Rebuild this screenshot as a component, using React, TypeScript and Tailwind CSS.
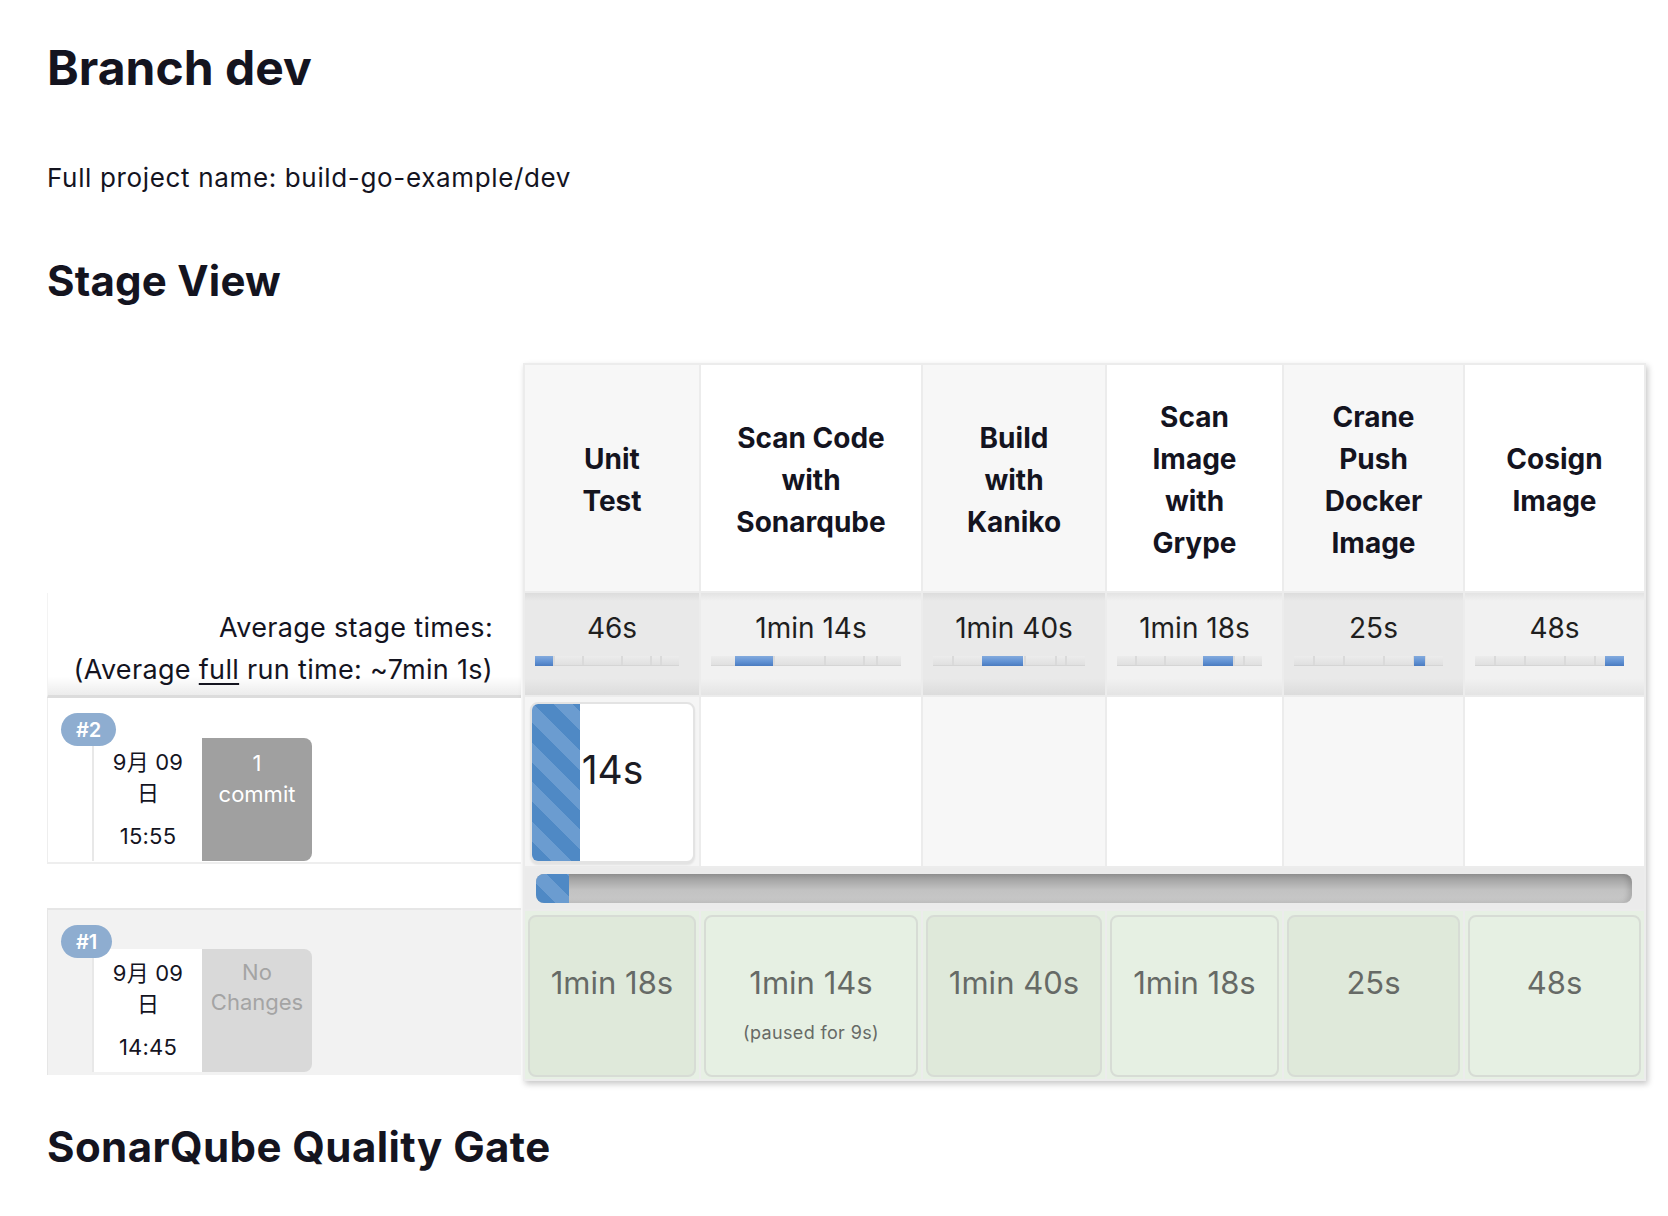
import React from 'react';

type Stage = {
  name: string[];
  avg: string;
  seg: [number, number];
  run1: string;
  paused?: string;
};

const stages: Stage[] = [
  { name: ['Unit', 'Test'], avg: '46s', seg: [0, 12.6], run1: '1min 18s' },
  { name: ['Scan Code', 'with', 'Sonarqube'], avg: '1min 14s', seg: [12.6, 32.6], run1: '1min 14s', paused: '(paused for 9s)' },
  { name: ['Build', 'with', 'Kaniko'], avg: '1min 40s', seg: [32.3, 59.5], run1: '1min 40s' },
  { name: ['Scan', 'Image', 'with', 'Grype'], avg: '1min 18s', seg: [59.5, 80.3], run1: '1min 18s' },
  { name: ['Crane', 'Push', 'Docker', 'Image'], avg: '25s', seg: [80.3, 87.6], run1: '25s' },
  { name: ['Cosign', 'Image'], avg: '48s', seg: [87, 100], run1: '48s' },
];

const ticks = [12.6, 32.6, 59.6, 80.2, 87];

function MiniBar({ seg }: { seg: [number, number] }) {
  return (
    <div className="relative ml-[10px] mr-[20px] mt-[10px] h-[10px] border-b border-[#d5d5d5] bg-[linear-gradient(to_bottom,#ececec,#e0e0e0)]">
      {ticks.map((t) => (
        <div key={t} className="absolute top-0 bottom-0 w-[2px] bg-[#dadada]" style={{ left: `${t}%` }} />
      ))}
      <div
        className="absolute top-0 bottom-[-1px] bg-[linear-gradient(to_bottom,#84abdd,#6192d4_55%,#4a7bc0)]"
        style={{ left: `${seg[0]}%`, width: `${seg[1] - seg[0]}%` }}
      />
    </div>
  );
}

function RunLabel({
  num,
  date,
  time,
  changes,
  variant,
}: {
  num: string;
  date: string;
  time: string;
  changes: string[];
  variant: 'active' | 'done';
}) {
  const active = variant === 'active';
  return (
    <div
      className={
        active
          ? 'relative flex border-b-2 border-l border-[#eeeeee] bg-white pb-[1px] pl-[44px] pt-[40px]'
          : 'relative flex border-t-2 border-l border-[#e6e6e6] bg-[#f2f2f2] pb-[3px] pl-[44px] pt-[39px]'
      }
    >
      <div className="h-[123px] w-[110px] border-l-2 border-[#e8e8e8] bg-white pt-[9px] text-center text-[22px] leading-[31px] tracking-[0.01em] text-[#14141f]">
        <div>{date}</div>
        <div>日</div>
        <div className="mt-[12px]">{time}</div>
      </div>
      <div
        className={
          active
            ? 'h-[123px] w-[110px] rounded-r-[8px] bg-[#a0a0a0] pt-[10px] text-center text-[22px] leading-[31px] text-white'
            : 'h-[123px] w-[110px] rounded-r-[8px] bg-[#d9d9d9] pt-[8px] text-center text-[22px] leading-[30px] text-[#a4a4a4]'
        }
      >
        {changes.map((c) => (
          <div key={c}>{c}</div>
        ))}
      </div>
      <div className="absolute left-[13px] top-[15px] z-10 flex h-[33px] items-center rounded-full bg-[#8eadd0] px-[15px] text-[20px] font-semibold text-white">
        {num}
      </div>
    </div>
  );
}

export default function App() {
  return (
    <div className="min-h-screen bg-white pl-[47px] pt-[44px] text-[#14141f] [font-family:Inter,'Noto_Sans_CJK_JP',sans-serif]">
      <h1 className="text-[48px] font-bold leading-none">Branch dev</h1>
      <p className="mt-[73px] text-[26px] leading-none tracking-[0.025em]">Full project name: build-go-example/dev</p>
      <h2 className="mt-[69px] text-[42px] font-bold leading-none tracking-[0.005em]">Stage View</h2>

      <div className="mt-[61px] flex items-start">
        {/* left column */}
        <div className="flex w-[474px] flex-col">
          <div className="h-[230px]" />
          <div className="h-[105px] border-b-[3px] border-l border-[#dcdcdc] border-l-[#f3f3f3] bg-[linear-gradient(to_bottom,#ffffff_0%,#ffffff_82%,#ececec_100%)] pr-[28px] pt-[14px] text-right text-[27px] leading-[42px] tracking-[0.012em]">
            <div>Average stage times:</div>
            <div>
              (Average <span className="underline underline-offset-[4px]">full</span> run time: ~7min 1s)
            </div>
          </div>
          <RunLabel num="#2" date="9月 09" time="15:55" changes={['1', 'commit']} variant="active" />
          <div className="mt-[44px]">
            <RunLabel num="#1" date="9月 09" time="14:45" changes={['No', 'Changes']} variant="done" />
          </div>
        </div>

        {/* stage table */}
        <div className="ml-[2px] grid grid-cols-[174px_220px_182px_175px_179px_179px] gap-[2px] bg-[#ececec] p-[2px] shadow-[2px_3px_6px_rgba(0,0,0,0.22)]">
          {/* header */}
          {stages.map((s, i) => (
            <div
              key={'h' + i}
              className={
                i % 2 === 0
                  ? 'flex h-[226px] flex-col items-center justify-center bg-[#f7f7f7] pt-[4px] text-center text-[28px] font-bold leading-[42px]'
                  : 'flex h-[226px] flex-col items-center justify-center bg-white pt-[4px] text-center text-[28px] font-bold leading-[42px]'
              }
            >
              {s.name.map((n) => (
                <div key={n}>{n}</div>
              ))}
            </div>
          ))}

          {/* average row */}
          {stages.map((s, i) => (
            <div
              key={'a' + i}
              className={
                i % 2 === 0
                  ? 'h-[102px] bg-[linear-gradient(to_bottom,#dcdcdc_0px,#e9e9e9_8px,#e9e9e9_84%,#dcdcdc_100%)] pt-[17px]'
                  : 'h-[102px] bg-[linear-gradient(to_bottom,#e3e3e3_0px,#f1f1f1_8px,#f1f1f1_84%,#e4e4e4_100%)] pt-[17px]'
              }
            >
              <div className="text-center text-[28px] leading-[36px] text-[#1f1f1f]">{s.avg}</div>
              <MiniBar seg={s.seg} />
            </div>
          ))}

          {/* run #2 */}
          {stages.map((s, i) =>
            i === 0 ? (
              <div key={'r2' + i} className="h-[169px] bg-[#f5f5f5] pl-[5px] pr-[4px] pt-[5px]">
                <div className="relative h-[161px] overflow-hidden rounded-[8px] border-2 border-[#e3e3e3] bg-white shadow-[0_2px_2px_rgba(0,0,0,0.08)]">
                  <div className="absolute bottom-0 left-0 top-0 w-[48px] bg-[repeating-linear-gradient(45deg,#4f89c5_0px,#4f89c5_14px,#6b9cd0_14px,#6b9cd0_28px)]" />
                  <div className="relative pt-[46px] text-center text-[39px] leading-none text-[#1c1c24]">14s</div>
                </div>
              </div>
            ) : (
              <div key={'r2' + i} className={i % 2 === 0 ? 'h-[169px] bg-[#f7f7f7]' : 'h-[169px] bg-white'} />
            )
          )}

          {/* progress */}
          <div className="col-span-6 h-[41px] bg-[#ebebeb] pl-[11px] pr-[12px] pt-[6px]">
            <div className="flex h-[29px] overflow-hidden rounded-[8px] bg-[linear-gradient(to_bottom,#969696,#c2c2c2_55%,#c8c8c8)] shadow-[inset_-4px_0_5px_rgba(0,0,0,0.12)]">
              <div className="h-full w-[33px] bg-[repeating-linear-gradient(45deg,#4f89c5_0px,#4f89c5_14px,#6b9cd0_14px,#6b9cd0_28px)]" />
            </div>
          </div>

          {/* run #1 */}
          {stages.map((s, i) => (
            <div key={'r1' + i} className="h-[168px] bg-[#e7f0e4] px-[3px] pt-[4px]">
              <div
                className={
                  i % 2 === 0
                    ? 'flex h-[162px] flex-col items-center rounded-[8px] border-2 border-[#d7dcd5] bg-[#dfe9da] pt-[50px] text-[#666a66]'
                    : 'flex h-[162px] flex-col items-center rounded-[8px] border-2 border-[#d7dcd5] bg-[#e6f0e3] pt-[50px] text-[#666a66]'
                }
              >
                <div className="text-[31px] leading-none">{s.run1}</div>
                {s.paused && <div className="mt-[26px] text-[18px] leading-none tracking-[0.02em]">{s.paused}</div>}
              </div>
            </div>
          ))}
        </div>
      </div>

      <h2 className="mt-[45px] pb-[40px] text-[42px] font-bold leading-none tracking-[0.01em]">SonarQube Quality Gate</h2>
    </div>
  );
}
